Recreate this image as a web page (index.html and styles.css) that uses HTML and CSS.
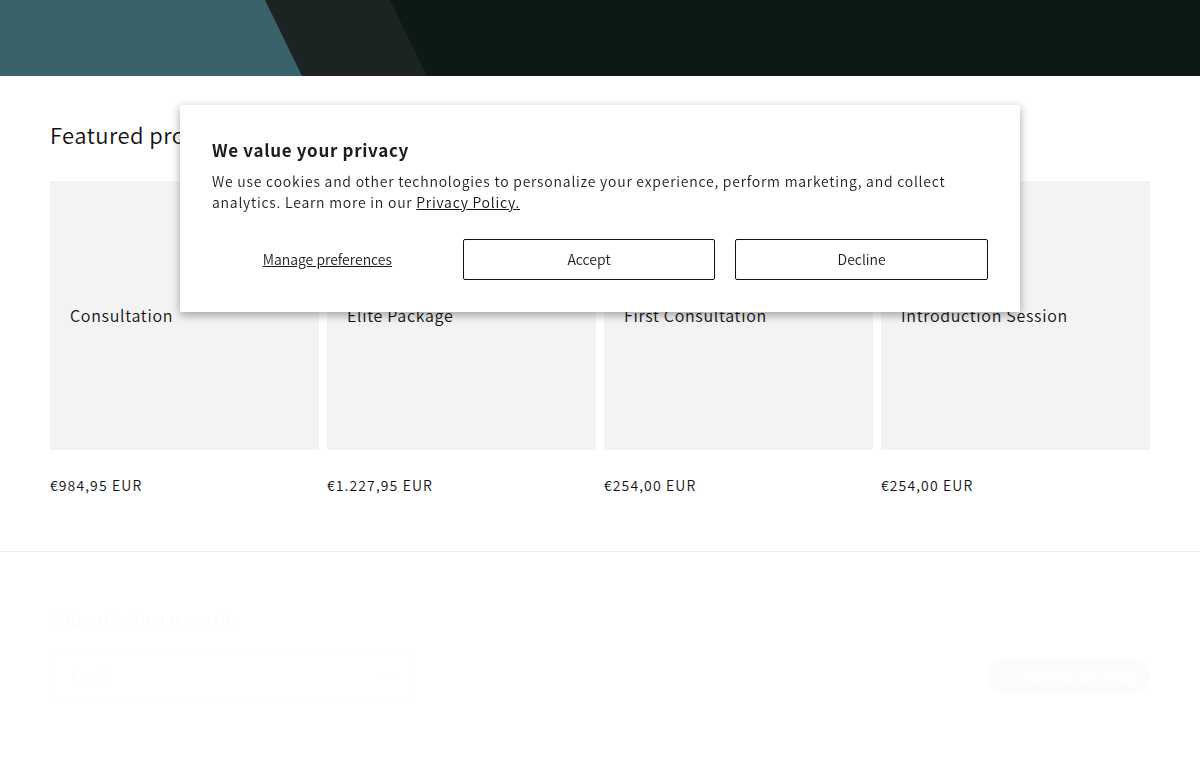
FILE: index.html
```html
<!DOCTYPE html>
<html lang="en">
<head>
    <meta charset="UTF-8">
    <meta name="viewport" content="width=device-width, initial-scale=1.0">
    <title>Featured products</title>
    <link rel="stylesheet" href="styles.css">
</head>
<body>
    <div class="hero">
        <svg class="hero-art" viewBox="0 0 1200 76" preserveAspectRatio="none" aria-hidden="true">
            <rect width="1200" height="76" fill="#0d1917"/>
            <path d="M0 0H390L427 76H0Z" fill="#1b2422"/>
            <path d="M0 0H265L302 76H0Z" fill="#396369"/>
        </svg>
    </div>

    <main class="featured">
        <h2 class="section-title">Featured products</h2>
        <ul class="product-grid">
            <li class="product">
                <a href="#" class="product-card">Consultation</a>
                <div class="price">€984,95 EUR</div>
            </li>
            <li class="product">
                <a href="#" class="product-card">Elite Package</a>
                <div class="price">€1.227,95 EUR</div>
            </li>
            <li class="product">
                <a href="#" class="product-card">First Consultation</a>
                <div class="price">€254,00 EUR</div>
            </li>
            <li class="product">
                <a href="#" class="product-card">Introduction Session</a>
                <div class="price">€254,00 EUR</div>
            </li>
        </ul>
    </main>

    <footer class="footer">
        <div class="footer-content">
            <form class="newsletter">
                <h2 class="newsletter-title"><label for="email">Subscribe to our emails</label></h2>
                <div class="field">
                    <input type="email" id="email" placeholder="Email">
                    <button type="button" class="field-button" aria-label="Subscribe">
                        <svg viewBox="0 0 14 10" width="14" height="10" fill="none" stroke="currentColor" aria-hidden="true">
                            <path d="M0 5H13M9 1L13 5L9 9"/>
                        </svg>
                    </button>
                </div>
            </form>
            <button type="button" class="follow">
                <svg viewBox="0 0 16 16" width="16" height="16" fill="none" stroke="currentColor" stroke-width="2" aria-hidden="true">
                    <path d="M8 14L3 9A3 3 0 0 1 8 4A3 3 0 0 1 13 9Z"/>
                </svg>
                Follow on shop
            </button>
        </div>
    </footer>

    <div class="cookie-banner" role="dialog" aria-labelledby="cookie-title">
        <h2 id="cookie-title" class="cookie-title">We value your privacy</h2>
        <p class="cookie-text">We use cookies and other technologies to personalize your experience, perform marketing, and collect analytics. Learn more in our <a href="#">Privacy Policy.</a></p>
        <div class="cookie-buttons">
            <button type="button" class="cookie-prefs">Manage preferences</button>
            <button type="button" class="cookie-button">Accept</button>
            <button type="button" class="cookie-button">Decline</button>
        </div>
    </div>
</body>
</html>
```

FILE: styles.css
```css
* {
    box-sizing: border-box;
}

body {
    margin: 0;
    font-family: "Noto Sans CJK SC", "Noto Sans", sans-serif;
    font-size: 14px;
    font-weight: 350;
    letter-spacing: 0.05em;
    color: #121212;
    background-color: #fff;
}

h2, p, ul {
    margin: 0;
    padding: 0;
}

button, input {
    font: inherit;
    color: inherit;
}

/* Hero */
.hero {
    height: 76px;
}

.hero-art {
    display: block;
    width: 100%;
    height: 100%;
}

/* Featured products */
.featured {
    padding: 42px 50px 54px;
}

.section-title {
    font-size: 22px;
    font-weight: 350;
    line-height: 32px;
    letter-spacing: 0.02em;
    margin-bottom: 31px;
}

.product-grid {
    display: grid;
    grid-template-columns: repeat(4, 1fr);
    gap: 8px;
    list-style: none;
}

.product-card {
    display: flex;
    align-items: center;
    aspect-ratio: 1;
    padding: 18px 20px 20px;
    font-size: 16px;
    color: #121212;
    background-color: #f3f3f3;
    text-decoration: none;
}

.price {
    margin-top: 23px;
    line-height: 24px;
    letter-spacing: 0.08em;
}

/* Footer */
.footer {
    border-top: 1px solid #ebebeb;
    padding: 51px 50px;
}

.footer-content {
    display: flex;
    justify-content: space-between;
    align-items: flex-end;
    opacity: 0.01;
}

.newsletter {
    width: 360px;
}

.newsletter-title {
    font-size: 16px;
    font-weight: 350;
    line-height: 32px;
    margin-bottom: 17px;
}

.field {
    display: flex;
    border: 1px solid #121212;
}

.field input {
    flex: 1;
    min-width: 0;
    height: 44px;
    padding: 0 20px;
    border: 0;
    background: none;
}

.field-button {
    width: 44px;
    border: 0;
    background: none;
}

.follow {
    display: flex;
    align-items: center;
    justify-content: center;
    gap: 8px;
    width: 162px;
    height: 36px;
    margin-bottom: 4px;
    padding: 0;
    font-size: 16px;
    font-weight: 700;
    color: #fff;
    background-color: #5433eb;
    border: 0;
    border-radius: 18px;
}

/* Cookie banner, floats over the page */
.cookie-banner {
    position: fixed;
    top: 105px;
    left: 50%;
    transform: translateX(-50%);
    width: calc(100% - 40px);
    max-width: 840px;
    padding: 32px;
    color: #1c1c1c;
    background-color: #fff;
    box-shadow: 0 3px 9px rgba(0, 0, 0, 0.35);
}

.cookie-title {
    font-size: 17px;
    font-weight: 700;
    line-height: 25px;
    letter-spacing: 0.04em;
    margin-bottom: 9px;
}

.cookie-text {
    line-height: 21px;
    letter-spacing: 0.055em;
    margin-bottom: 26px;
}

.cookie-text a {
    color: #121212;
}

.cookie-buttons {
    display: flex;
    gap: 20px;
}

.cookie-buttons button {
    box-sizing: content-box;
    flex: 1;
    line-height: 19px;
    background: none;
    cursor: pointer;
}

.cookie-prefs {
    padding: 0;
    border: 0;
    text-decoration: underline;
}

.cookie-button {
    padding: 10px;
    border: 1px solid #121212;
    border-radius: 2px;
}
```
